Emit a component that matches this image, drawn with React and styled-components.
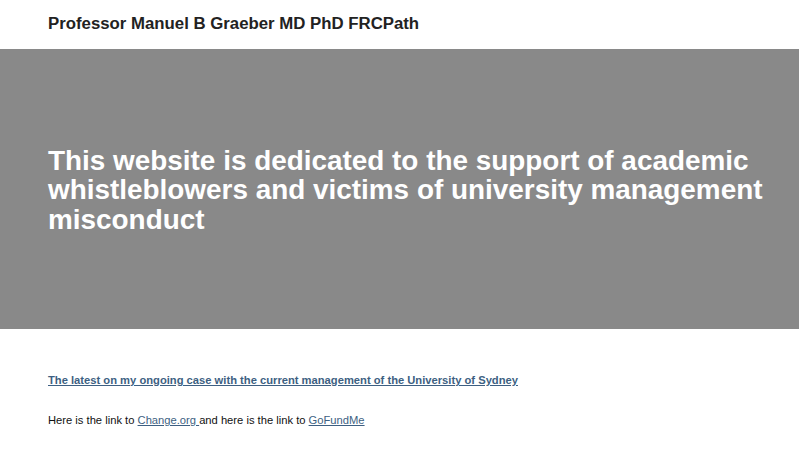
import React from "react";
import styled, { createGlobalStyle } from "styled-components";

const Global = createGlobalStyle`
  html, body { margin: 0; padding: 0; background: #fff; }
  body { font-family: "Liberation Sans", Arial, sans-serif; }
`;

const Header = styled.header`
  height: 49px;
  display: flex;
  align-items: center;
  padding: 0 48px;
  box-sizing: border-box;
  padding-bottom: 2px;
`;

const SiteTitle = styled.h1`
  margin: 0;
  font-size: 16.8px;
  font-weight: 700;
  color: #222;
`;

const Hero = styled.section`
  background: #898989;
  height: 280px;
  display: flex;
  align-items: center;
  padding: 0 30px 0 48px;
  box-sizing: border-box;
`;

const HeroText = styled.h2`
  margin: 0;
  color: #fff;
  font-size: 27.9px;
  line-height: 29.5px;
  font-weight: 700;
  max-width: 721px;
  padding-top: 2px;
`;

const Content = styled.main`
  padding: 44px 48px 0;
  display: flex;
  flex-direction: column;
  gap: 26px;
`;

const Para = styled.p`
  margin: 0;
  font-size: 11.2px;
  font-weight: ${(p) => (p.$bold ? 700 : 400)};
  color: #111;
  line-height: 14px;
`;

const Link = styled.a`
  color: #3d5f82;
  text-decoration: underline;
`;

export default function App() {
  return (
    <>
      <Global />
      <Header>
        <SiteTitle>Professor Manuel B Graeber MD PhD FRCPath</SiteTitle>
      </Header>
      <Hero>
        <HeroText>
          This website is dedicated to the support of academic whistleblowers
          and victims of university management misconduct
        </HeroText>
      </Hero>
      <Content>
        <Para $bold>
          <Link href="#">
            The latest on my ongoing case with the current management of the
            University of Sydney
          </Link>
        </Para>
        <Para>
          Here is the link to <Link href="#">Change.org </Link>and here is the
          link to <Link href="#">GoFundMe</Link>
        </Para>
      </Content>
    </>
  );
}
